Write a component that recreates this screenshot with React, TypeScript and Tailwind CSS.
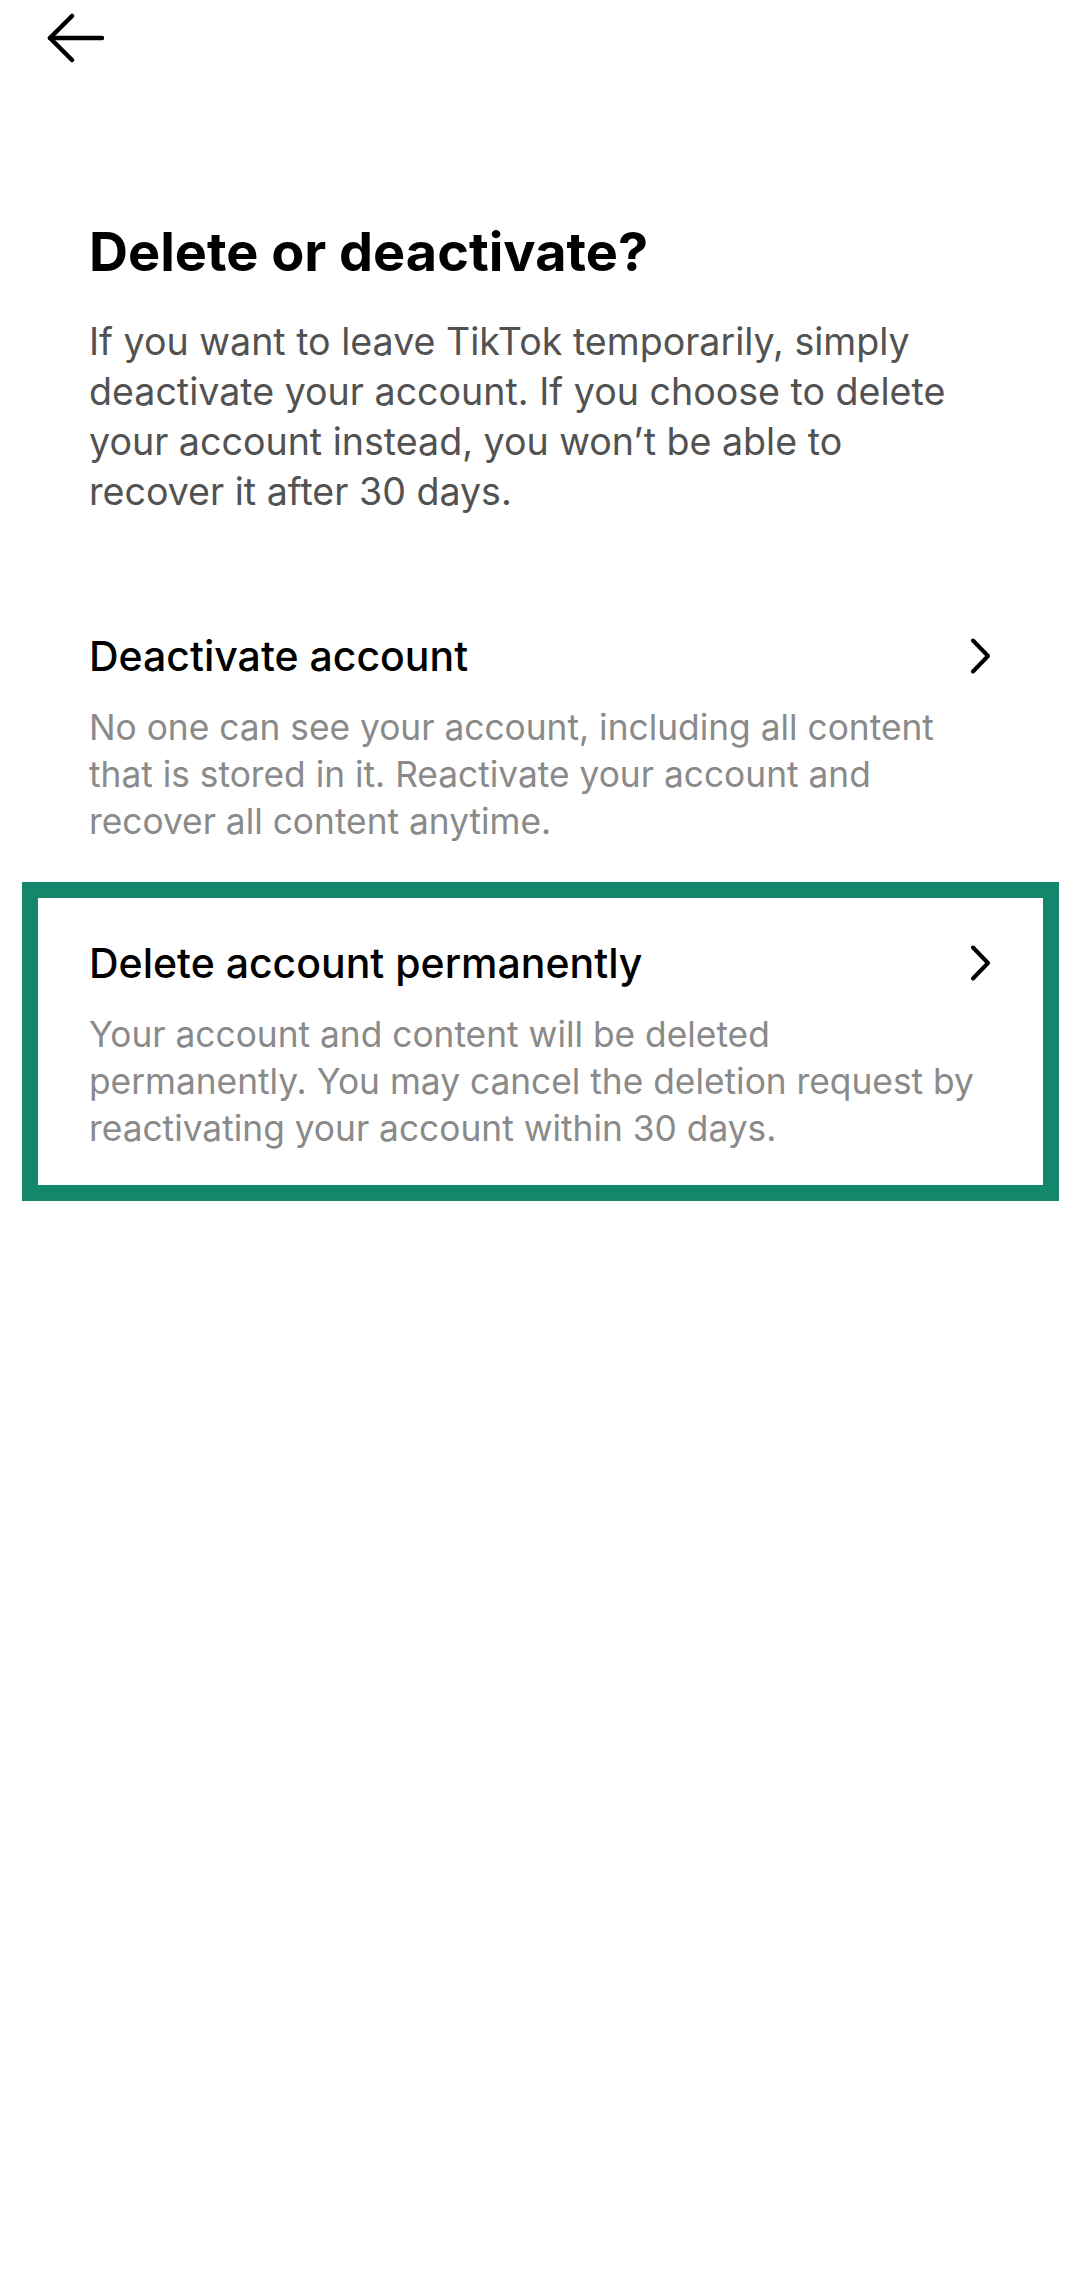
import React from "react";

const FONT = { fontFamily: "Inter, 'Noto Sans', sans-serif" };

function BackArrow() {
  return (
    <svg width="60" height="50" viewBox="0 0 60 50" fill="none">
      <path d="M6 25 H58" stroke="#000" strokeWidth="4.5" strokeLinecap="round" />
      <path d="M28 3 L6 25 L28 47" stroke="#000" strokeWidth="4.5" strokeLinecap="round" strokeLinejoin="round" />
    </svg>
  );
}

function Chevron() {
  return (
    <svg width="22" height="36" viewBox="0 0 22 36" fill="none" className="shrink-0">
      <path d="M3 2.5 L18 18 L3 33.5" stroke="#000" strokeWidth="4" strokeLinecap="round" strokeLinejoin="round" />
    </svg>
  );
}

type Option = {
  title: string;
  lines: string[];
  highlighted?: boolean;
};

const OPTIONS: Option[] = [
  {
    title: "Deactivate account",
    lines: [
      "No one can see your account, including all content",
      "that is stored in it. Reactivate your account and",
      "recover all content anytime.",
    ],
  },
  {
    title: "Delete account permanently",
    lines: [
      "Your account and content will be deleted",
      "permanently. You may cancel the deletion request by",
      "reactivating your account within 30 days.",
    ],
    highlighted: true,
  },
];

function OptionRow({ option }: { option: Option }) {
  return (
    <div className="relative pt-[46px] pb-[47px]">
      {/* annotation frame around the selected row */}
      {option.highlighted && (
        <div className="absolute -top-[10px] -bottom-[2px] -left-[67px] -right-[67px] border-[16px] border-[#12876c] pointer-events-none" />
      )}
      <div className="flex items-center justify-between">
        <span className="text-[41px] leading-[50px] font-medium text-black whitespace-nowrap">
          {option.title}
        </span>
        <Chevron />
      </div>
      <p className="mt-[23px] text-[35.3px] leading-[47px] text-[#8a8a8a] whitespace-nowrap">
        {option.lines.map((l, i) => (
          <React.Fragment key={i}>
            {l}
            {i < option.lines.length - 1 && <br />}
          </React.Fragment>
        ))}
      </p>
    </div>
  );
}

export default function App() {
  return (
    <div className="w-[1080px] h-[2277px] bg-white overflow-hidden" style={FONT}>
      <div className="h-[76px] pl-[44px] flex items-center">
        <BackArrow />
      </div>

      <div className="pl-[89px] pr-[88px]">
        <h1 className="mt-[144px] text-[54px] leading-[64px] font-bold text-black">
          Delete or deactivate?
        </h1>
        <p className="mt-[33px] text-[37.6px] leading-[50px] text-[#525252] whitespace-nowrap">
          If you want to leave TikTok temporarily, simply
          <br />
          deactivate your account. If you choose to delete
          <br />
          your account instead, you won’t be able to
          <br />
          recover it after 30 days.
        </p>

        <div className="mt-[68px]">
          {OPTIONS.map((o) => (
            <OptionRow key={o.title} option={o} />
          ))}
        </div>
      </div>
    </div>
  );
}
